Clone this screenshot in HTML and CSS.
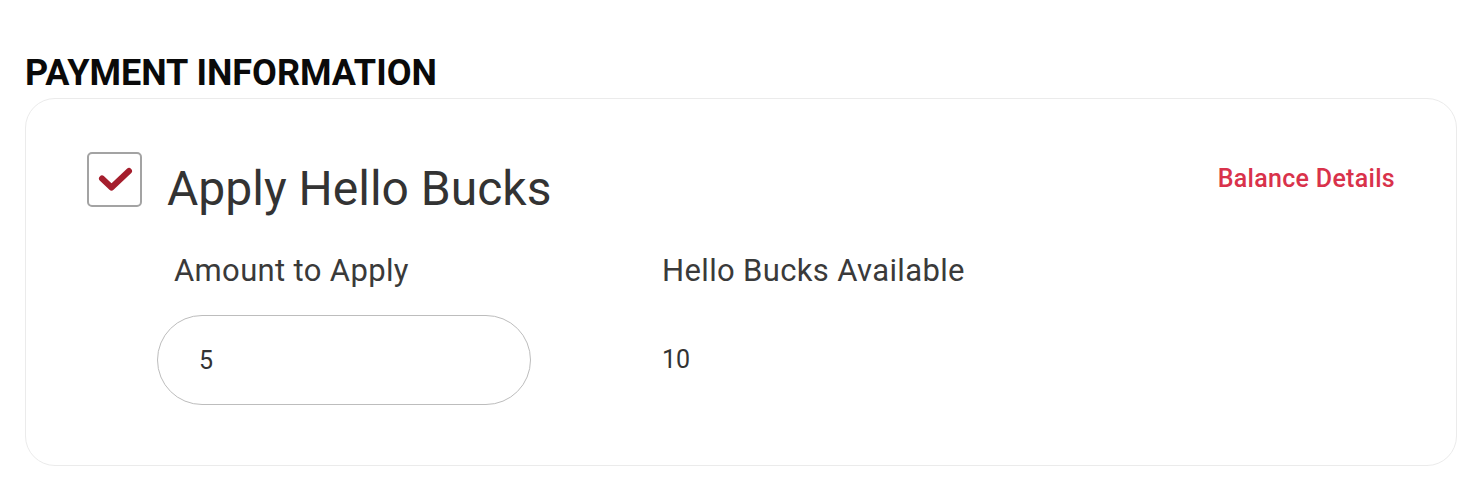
FILE: index.html
```html
<!DOCTYPE html>
<html lang="en">
<head>
    <meta charset="UTF-8">
    <meta name="viewport" content="width=device-width, initial-scale=1.0">
    <title>Payment Information</title>
    <link rel="stylesheet" href="styles.css">
</head>
<body>
    <main>
        <h2 class="section-title">PAYMENT INFORMATION</h2>
        <section class="card">
            <div class="card-head">
                <label class="apply">
                    <span class="checkbox">
                        <svg width="55" height="55" viewBox="0 0 55 55" aria-hidden="true">
                            <path d="M15 26.5 L24.5 35.5 L42 19" fill="none" stroke="#a51e2d" stroke-width="6" stroke-linecap="round" stroke-linejoin="round"/>
                        </svg>
                    </span>
                    <span class="apply-title">Apply Hello Bucks</span>
                </label>
                <a class="balance-link" href="#">Balance Details</a>
            </div>
            <div class="fields">
                <div class="field-label indent">Amount to Apply</div>
                <div class="field-label">Hello Bucks Available</div>
                <input class="amount" type="text" value="5">
                <div class="available">10</div>
            </div>
        </section>
    </main>
</body>
</html>
```

FILE: styles.css
```css
body {
    margin: 0;
    padding: 0 19px 0 25px;
    font-family: Roboto, "Noto Sans", Arial, sans-serif;
    background: #fff;
    color: #333;
}

.section-title {
    margin: 53px 0 5px;
    font-size: 36px;
    line-height: 40px;
    font-weight: 700;
    color: #0a0a0a;
}

.card {
    border: 1px solid #ebebeb;
    border-radius: 30px;
    padding: 53px 61px 60px;
}

.card-head {
    display: flex;
    justify-content: space-between;
    align-items: flex-start;
}

.apply {
    display: flex;
    align-items: flex-start;
    gap: 25px;
    cursor: pointer;
}

.checkbox {
    width: 51px;
    height: 51px;
    border: 2px solid #a3a3a3;
    border-radius: 5px;
    position: relative;
}

.checkbox svg {
    position: absolute;
    left: -2px;
    top: -2px;
}

.apply-title {
    margin-top: 9px;
    font-size: 48px;
    line-height: 56px;
    color: #333;
}

.balance-link {
    margin-top: 13px;
    font-size: 25px;
    line-height: 28px;
    letter-spacing: 0.3px;
    font-weight: 500;
    color: #d9324b;
    text-decoration: none;
}

.fields {
    display: grid;
    grid-template-columns: 505px auto;
    row-gap: 26px;
    margin: 36px 0 0 70px;
}

.field-label {
    font-size: 31px;
    line-height: 36px;
    letter-spacing: 0.35px;
    color: #3a3a3a;
}

.field-label.indent {
    padding-left: 17px;
}

.amount {
    box-sizing: border-box;
    width: 374px;
    height: 90px;
    border: 1.5px solid #bdbdbd;
    border-radius: 45px;
    padding: 0 0 0 41px;
    font-family: inherit;
    font-size: 25px;
    color: #333;
    background: #fff;
    outline: none;
}

.available {
    align-self: center;
    font-size: 25px;
    line-height: 28px;
    color: #333;
}
```
